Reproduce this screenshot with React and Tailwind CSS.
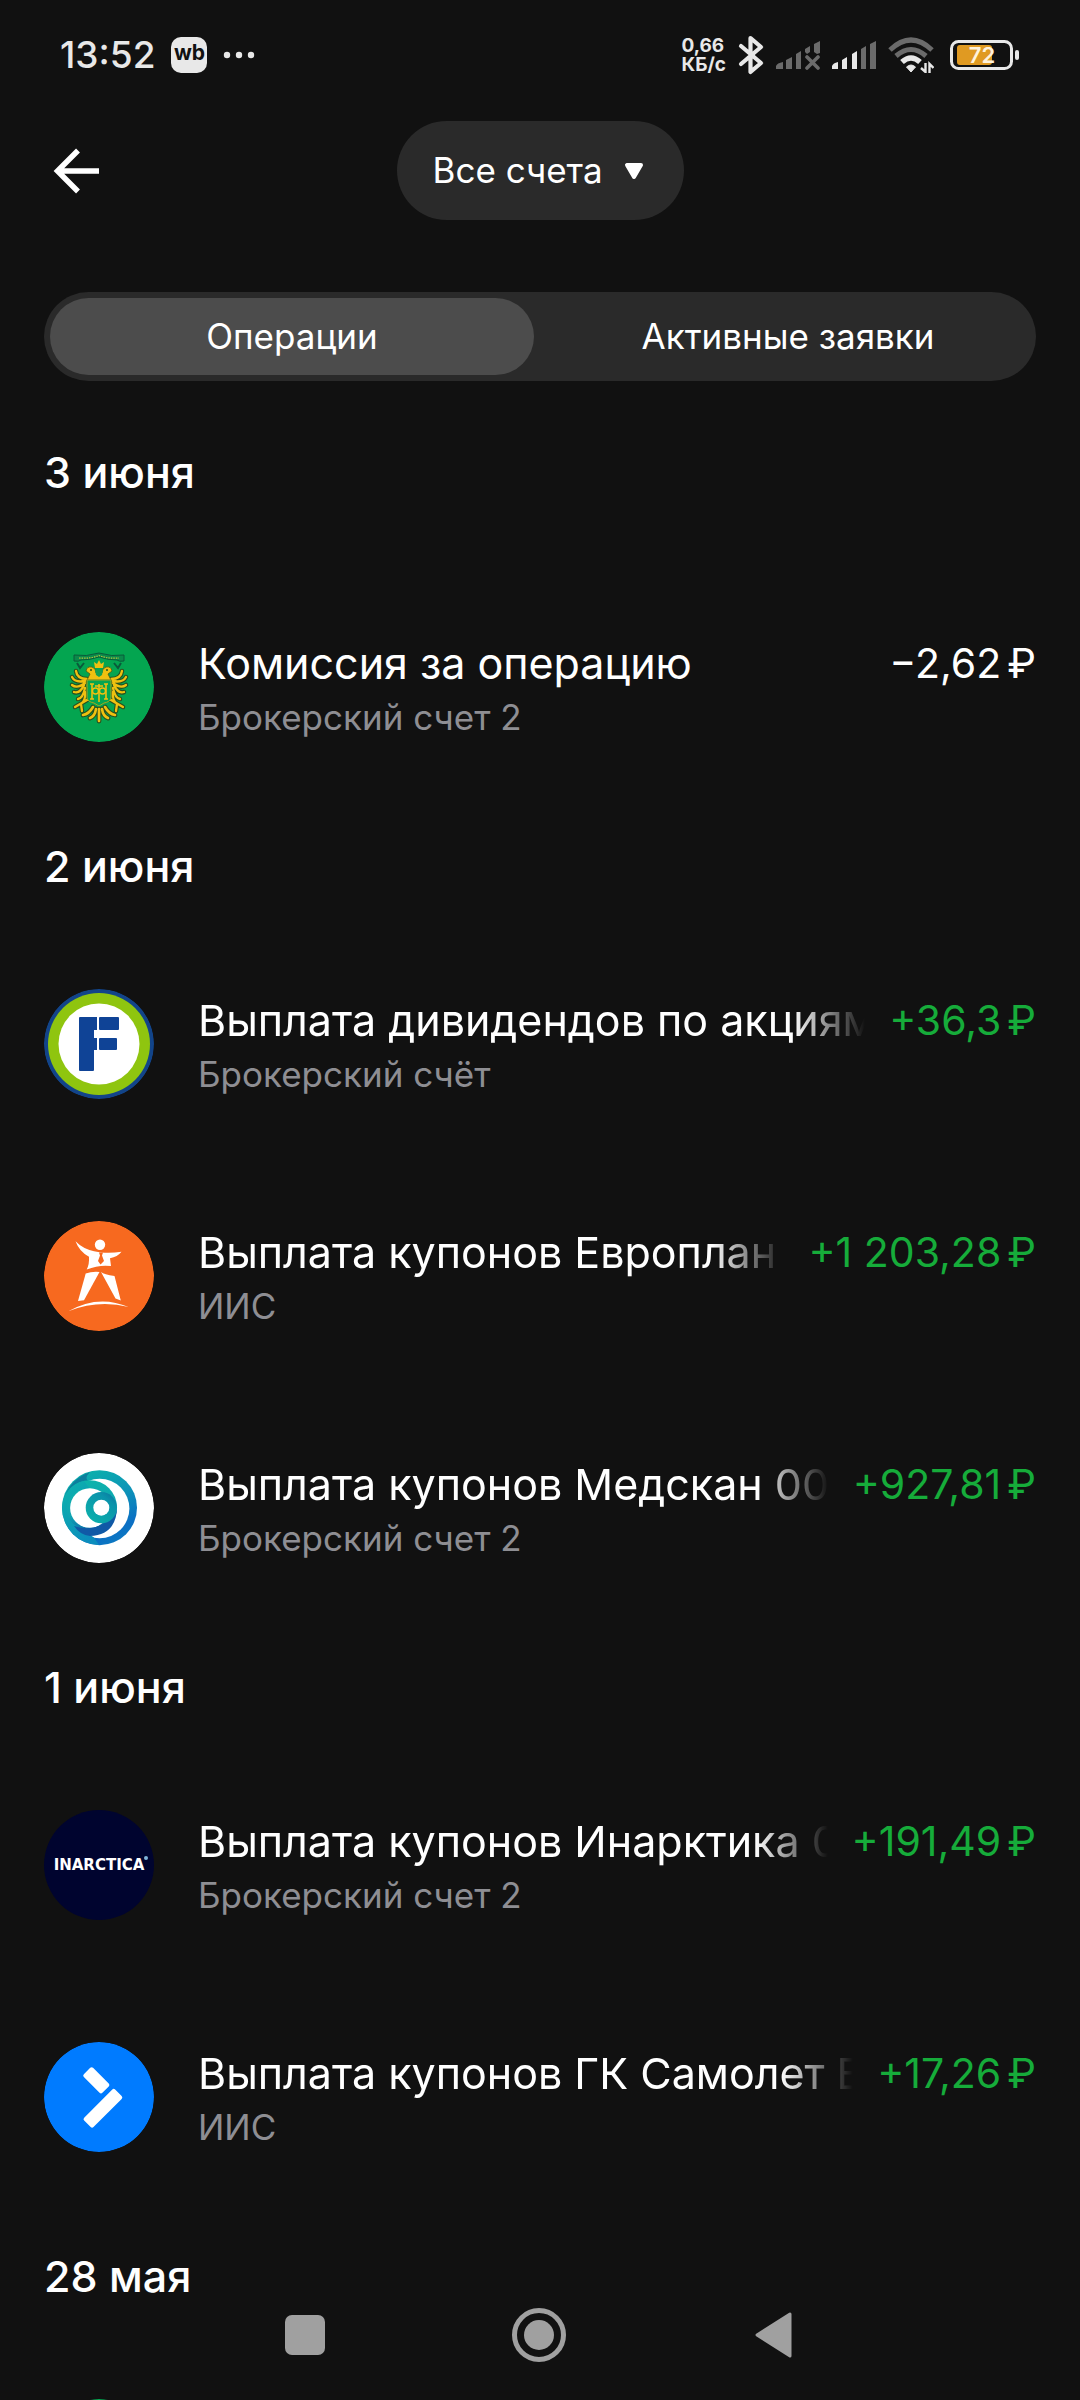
import { useState } from 'react';
import clsx from 'clsx';

const CrestLogo = () => (
    <svg viewBox="0 0 110 110" className="w-full h-full" aria-hidden="true">
        <circle cx="55" cy="55" r="55" fill="#04a550" />
        {/* Ribbon */}
        <path d="M30 23q12 2 25-2q13 4 25 2v6q-5 1-7-1q-9 0-18-3q-9 3-18 3q-2 2-7 1z" fill="#0b8a4a" stroke="#0a5a3a" strokeWidth="1" />
        <path d="M35 26q11 1 20-2.500q9 3.500 20 2.500" fill="none" stroke="#b9c23a" strokeWidth="1.200" strokeDasharray="1.500 1" />
        <path d="M33 31l3 5l4-5M77 31l-3 5l-4-5" fill="none" stroke="#0a5a3a" strokeWidth="2" />
        {/* Wings */}
        <g fill="none" stroke="#27501f" strokeWidth="4.500" strokeLinecap="round">
            <path d="M43 47Q33 47 32 39M41 49Q31 51 28 45M41 51Q33 57 28 53M40 53Q36 62 30 60M41 56Q39 66 34 67M41 60Q42 68 37 72M43 68L31 75M37 72L38 79" />
            <path d="M67 47Q77 47 78 39M69 49Q79 51 82 45M69 51Q77 57 82 53M70 53Q74 62 80 60M69 56Q71 66 76 67M69 60Q68 68 73 72M67 68L79 75M73 72L72 79" />
        </g>
        <g fill="none" stroke="#efc010" strokeWidth="2.300" strokeLinecap="round">
            <path d="M43 47Q33 47 32 39M41 49Q31 51 28 45M41 51Q33 57 28 53M40 53Q36 62 30 60M41 56Q39 66 34 67M41 60Q42 68 37 72M43 68L31 75M37 72L38 79" />
            <path d="M67 47Q77 47 78 39M69 49Q79 51 82 45M69 51Q77 57 82 53M70 53Q74 62 80 60M69 56Q71 66 76 67M69 60Q68 68 73 72M67 68L79 75M73 72L72 79" />
        </g>
        {/* Heads and crown */}
        <path d="M43 48l3-6l-4-3q1-5 6-4q4 1 4 6l3 3l3-3q0-5 4-6q5-1 6 4l-4 3l3 6z" fill="#efc010" stroke="#4a5a18" strokeWidth=".8" />
        <circle cx="47" cy="38" r="1" fill="#27501f" />
        <circle cx="63" cy="38" r="1" fill="#27501f" />
        <path d="M51 36l-1-6l3 2l2-4l2 4l3-2l-1 6z" fill="#efc010" />
        <path d="M51 38h8l-1 5l-3 2l-3-2z" fill="#12a050" />
        {/* Tail */}
        <g fill="none" strokeLinecap="round">
            <path d="M55 77V89M52 77Q51 84 46 86M58 77Q59 84 64 86M49 75Q45 82 39 83M61 75Q65 82 71 83" stroke="#27501f" strokeWidth="4.800" />
            <path d="M55 77V89M52 77Q51 84 46 86M58 77Q59 84 64 86M49 75Q45 82 39 83M61 75Q65 82 71 83" stroke="#efc010" strokeWidth="2.600" />
        </g>
        {/* Shield with the monogram */}
        <path d="M43 48H67V66Q66 70 60 71L55 74L50 71Q44 70 43 66Z" fill="#04a550" stroke="#a6a51c" strokeWidth="1" />
        <path d="M48 52V67M62 52V67M55 52V70M51 54H59M46 52h4M60 52h4M46 67h4M60 67h4" fill="none" stroke="#efc010" strokeWidth="1.600" />
        <circle cx="51.500" cy="59" r="3" fill="none" stroke="#efc010" strokeWidth="1.400" />
        <circle cx="58.500" cy="59" r="3" fill="none" stroke="#efc010" strokeWidth="1.400" />
    </svg>
);

const BlockLogo = () => (
    <svg viewBox="0 0 110 110" className="w-full h-full" aria-hidden="true">
        <circle cx="55" cy="55" r="55" fill="#124489" />
        <circle cx="55" cy="55" r="51" fill="#8fc50f" />
        <circle cx="55" cy="55" r="40.500" fill="#fff" />
        <g fill="#0f4396">
            <path d="M36 28H53V41H50V49H53V61H50V81Q50 82 49 82H36Q35 82 35 81V29Q35 28 36 28Z" />
            <rect x="55" y="28" width="20" height="13" rx="1" />
            <rect x="55" y="49" width="18" height="12" rx="1" />
        </g>
    </svg>
);

const ManLogo = () => (
    <svg viewBox="0 0 110 110" className="w-full h-full" aria-hidden="true">
        <circle cx="55" cy="55" r="55" fill="#f7691f" />
        <g fill="#fff">
            <circle cx="56" cy="23.700" r="5.200" />
            <path d="M31.500 20.300Q39 28 50 30.200L57 31.500Q67 32.500 77.500 30.800Q73.500 36 66 37.300L67 45Q55 43.500 42.700 48.500Q45.500 43 45 35.700Q35.500 31 31.500 20.300Z" />
            <path d="M41.700 52.500Q48 50.300 55.500 51L40 79.200L34 80Z" />
            <path d="M57 51Q60 53.500 70.500 55L76.800 79.500L71.500 77.500Z" />
            <path d="M24.300 90.300Q54 73 84.700 86Q54 78.500 24.300 90.300Z" />
        </g>
        <path d="M55 31.500h4l-1 3l2 5.500l-3.500 3.500l-2.500-3.500l2-5.500z" fill="#f7691f" />
    </svg>
);

const RingsLogo = () => (
    <svg viewBox="0 0 110 110" className="w-full h-full" aria-hidden="true">
        <defs>
            <linearGradient id="ring-outer" x1="0.3" y1="0" x2="0.800" y2="1">
                <stop offset="0" stopColor="#0bb2ab" />
                <stop offset="0.450" stopColor="#0d93b8" />
                <stop offset="0.800" stopColor="#0b6fc4" />
                <stop offset="1" stopColor="#0c7cc0" />
            </linearGradient>
            <linearGradient id="ring-middle" x1="0.400" y1="0" x2="0.600" y2="1">
                <stop offset="0" stopColor="#0cb4ab" />
                <stop offset="0.600" stopColor="#0fa3b2" />
                <stop offset="1" stopColor="#0d5aa6" />
            </linearGradient>
            <linearGradient id="ring-inner" x1="1" y1="0" x2="0.200" y2="1">
                <stop offset="0" stopColor="#0d6c9c" />
                <stop offset="0.300" stopColor="#0a93ab" />
                <stop offset="1" stopColor="#0cb0ab" />
            </linearGradient>
            <linearGradient id="ring-left" x1="0" y1="0" x2="0.600" y2="1">
                <stop offset="0" stopColor="#0cb4ab" />
                <stop offset="1" stopColor="#0c8dbd" />
            </linearGradient>
        </defs>
        <circle cx="55" cy="55" r="55" fill="#fff" />
        <circle cx="55.500" cy="54.700" r="37.500" fill="url(#ring-outer)" />
        <path d="M20 46Q26 26 46 19Q40 25 44 28Q28 30 20 46Z" fill="#0c7f9d" />
        <circle cx="55.700" cy="55.500" r="29.700" fill="#fff" />
        <circle cx="45.800" cy="54.500" r="27.200" fill="url(#ring-middle)" />
        <path d="M18 54.700A27.500 27.500 0 0 1 40 28L46 36A20 20 0 0 0 31 72L50 84.500L55 92A37.500 37.500 0 0 1 18 54.700Z" fill="url(#ring-left)" />
        <circle cx="45.800" cy="55" r="19.700" fill="#fff" />
        <path d="M30 73Q48 79 62 69Q72 64 73 55Q72 82 46 83Q36 82 30 73Z" fill="#1059a6" />
        <circle cx="57.300" cy="54.700" r="15.600" fill="url(#ring-inner)" />
        <circle cx="57.300" cy="54.700" r="8" fill="#fff" />
    </svg>
);

const InarcticaLogo = () => (
    <div className="relative flex items-center justify-center w-full h-full bg-[#00042f]">
        <span className="font-['DejaVu_Sans'] font-bold text-[15px] leading-none text-white">INARCTICA</span>
        <span className="absolute top-[46px] right-[6px] w-1 h-1 rounded-full bg-[#7fb4d8]" />
    </div>
);

const ArrowLogo = () => (
    <svg viewBox="0 0 110 110" className="w-full h-full" aria-hidden="true">
        <circle cx="55" cy="55" r="55" fill="#007bff" />
        <rect x="39.200" y="31.800" width="26.200" height="13" rx="2" fill="#fff" transform="rotate(45 52.300 38.300)" />
        <rect x="37" y="59.700" width="43.800" height="13.200" rx="2" fill="#fff" transform="rotate(-45 58.900 66.300)" />
    </svg>
);

const SECTIONS = [
    {
        date: '3 июня',
        items: [{ logo: CrestLogo, title: 'Комиссия за операцию', account: 'Брокерский счет 2', amount: '−2,62' }],
    },
    {
        date: '2 июня',
        items: [
            { logo: BlockLogo, title: 'Выплата дивидендов по акциям', account: 'Брокерский счёт', amount: '+36,3', fade: true },
            { logo: ManLogo, title: 'Выплата купонов Европлан', account: 'ИИС', amount: '+1 203,28', fade: true },
            { logo: RingsLogo, title: 'Выплата купонов Медскан 00', account: 'Брокерский счет 2', amount: '+927,81', fade: true },
        ],
    },
    {
        date: '1 июня',
        items: [
            { logo: InarcticaLogo, title: 'Выплата купонов Инарктика 0', account: 'Брокерский счет 2', amount: '+191,49', fade: true },
            { logo: ArrowLogo, title: 'Выплата купонов ГК Самолет Б', account: 'ИИС', amount: '+17,26', fade: true },
        ],
    },
    {
        date: '28 мая',
        items: [{ logo: CrestLogo, title: '', account: '', amount: '' }],
    },
];

const StatusBar = () => (
    <div className="flex items-center justify-between h-[109px] px-[60px] shrink-0 text-[#e8e8e8]">
        <div className="flex items-center gap-4">
            <span className="text-[37px] leading-none font-medium">13:52</span>
            <span className="flex items-center justify-center w-9 h-9 rounded-[10px] bg-[#e8e8e8] text-[#111] text-[21px] leading-none font-bold pb-1">wb</span>
            <svg width="32" height="8" viewBox="0 0 32 8" fill="currentColor" aria-hidden="true">
                <circle cx="4" cy="4" r="3.200" />
                <circle cx="16" cy="4" r="3.200" />
                <circle cx="28" cy="4" r="3.200" />
            </svg>
        </div>
        <div className="flex items-center gap-3">
            <div className="flex flex-col text-[19px] leading-[19px] font-bold">
                <span>0,66</span>
                <span>КБ/с</span>
            </div>
            <svg width="26" height="40" viewBox="0 0 26 40" fill="none" stroke="currentColor" strokeWidth="4.200" strokeLinecap="round" strokeLinejoin="round" aria-hidden="true">
                <path d="M3 11L23 28L12.500 37V3L23 12L3 29" />
            </svg>
            <svg width="44" height="30" viewBox="0 0 44 30" fill="#6b6b6b" aria-hidden="true">
                <path d="M0 29V26Q1 23 7 22V29ZM10 29V20L16 17V29ZM20 29V14L25 11V29ZM29 12V9L34 6V12L31 14ZM38 12V4L44 1V13L41 14Z" />
                <path d="M31 17L42 28M42 17L31 28" stroke="#6b6b6b" strokeWidth="3.600" strokeLinecap="round" />
            </svg>
            <svg width="44" height="30" viewBox="0 0 44 30" fill="currentColor" aria-hidden="true">
                <path d="M0 29V26Q1 23 6 22V29ZM10 29V20L15 17V29ZM20 29V14L25 11V29Z" />
                <path d="M29 29V9L34 6V29ZM38 29V4L44 1V29Z" fill="#6b6b6b" />
            </svg>
            <svg width="46" height="36" viewBox="0 0 46 36" fill="none" aria-hidden="true">
                <path d="M2 13Q23-7 44 13" stroke="#6b6b6b" strokeWidth="5" />
                <path d="M8 19Q23 6 38 19" stroke="#6b6b6b" strokeWidth="5" />
                <path d="M14 25Q23 17 32 25" stroke="currentColor" strokeWidth="5.500" />
                <path d="M18.500 30Q23 26 27.500 30L23 35Z" fill="currentColor" stroke="currentColor" strokeWidth="1" />
                <path d="M37.500 26V35L33 31M41.500 36V27L45.500 31" stroke="currentColor" strokeWidth="2.400" />
            </svg>
            <svg width="70" height="32" viewBox="0 0 70 32" className="ml-1" role="img" aria-label="72">
                <rect x="1.500" y="2.500" width="60" height="27" rx="7" fill="none" stroke="#e8e8e8" strokeWidth="3" />
                <rect x="7" y="6" width="35" height="20" rx="3" fill="#e09a22" />
                <rect x="65" y="11" width="4" height="10" rx="2" fill="#e8e8e8" />
                <text x="32" y="24" textAnchor="middle" fill="#fff3dc" fontSize="22" fontWeight="600">72</text>
            </svg>
        </div>
    </div>
);

const OperationRow = ({ logo: Logo, title, account, amount, fade }) => (
    <li className="flex items-center gap-11 h-[232px]">
        <div className="w-[110px] h-[110px] rounded-full overflow-hidden shrink-0">
            <Logo />
        </div>
        <div className="flex-1 min-w-0">
            <div className="flex gap-6 leading-[60px]">
                <p
                    className={clsx(
                        'flex-1 min-w-0 overflow-hidden whitespace-nowrap text-[43px]',
                        fade && '[mask-image:linear-gradient(to_left,transparent,black_72px)]'
                    )}
                >
                    {title}
                </p>
                {amount && (
                    <p className={clsx('flex gap-[6px] whitespace-nowrap text-[41px]', amount.startsWith('+') && 'text-[#16ac3a]')}>
                        <span>{amount}</span>
                        <span>₽</span>
                    </p>
                )}
            </div>
            <p className="text-[35px] leading-[48px] text-[#8e8e93]">{account}</p>
        </div>
    </li>
);

const App = () => {
    const [tab, setTab] = useState('operations');

    const tabClass = (name) =>
        clsx('flex-1 h-[77px] rounded-full text-[35px] leading-none', tab === name && 'bg-[#4c4c4c]');

    return (
        <div className="relative flex flex-col h-screen overflow-hidden bg-[#111111] text-white font-['Inter',sans-serif]">
            <StatusBar />

            <header className="grid grid-cols-[1fr_auto_1fr] items-center px-[44px] pt-3 shrink-0">
                <button type="button" aria-label="Назад" className="justify-self-start p-2">
                    <svg width="48" height="48" viewBox="0 0 48 48" fill="none" stroke="currentColor" strokeWidth="5.500" aria-hidden="true">
                        <path d="M47 24H7M26 3.500L5.500 24L26 44.500" />
                    </svg>
                </button>
                <div className="relative">
                    <select
                        aria-label="Счета"
                        className="appearance-none h-[99px] pl-9 pr-20 rounded-full bg-[#2a2a2a] text-[35px] text-white"
                    >
                        <option>Все счета</option>
                    </select>
                    <svg width="20" height="18" viewBox="0 0 20 18" className="absolute right-10 top-[42px] pointer-events-none" aria-hidden="true">
                        <path d="M3 2H17L10 14Z" fill="#fff" stroke="#fff" strokeWidth="4" strokeLinejoin="round" />
                    </svg>
                </div>
            </header>

            <div className="flex gap-3 mx-[44px] mt-[72px] p-[6px] rounded-full bg-[#2a2a2a] shrink-0">
                <button type="button" className={tabClass('operations')} onClick={() => setTab('operations')}>
                    Операции
                </button>
                <button type="button" className={tabClass('orders')} onClick={() => setTab('orders')}>
                    Активные заявки
                </button>
            </div>

            <main className="flex-1 min-h-0 overflow-hidden px-[44px] pt-7">
                {SECTIONS.map(({ date, items }) => (
                    <section key={date} className="first:[&>ul]:pt-[37px]">
                        <h2 className="pt-[35px] pb-[33px] text-[43px] leading-[57px] font-medium">{date}</h2>
                        <ul>
                            {items.map((item, i) => (
                                <OperationRow key={i} {...item} />
                            ))}
                        </ul>
                    </section>
                ))}
            </main>

            {/* System navigation floats over the list */}
            <nav className="absolute inset-x-0 bottom-0 flex justify-center h-[130px] pr-0.5">
                <button type="button" aria-label="Недавние" className="flex items-center justify-center w-[234px]">
                    <span className="w-10 h-10 rounded-[7px] bg-[#a0a0a0]" />
                </button>
                <button type="button" aria-label="Домой" className="flex items-center justify-center w-[234px]">
                    <svg width="56" height="56" viewBox="0 0 56 56" aria-hidden="true">
                        <circle cx="28" cy="28" r="24.500" fill="none" stroke="#a0a0a0" strokeWidth="5" />
                        <circle cx="28" cy="28" r="15" fill="#a0a0a0" />
                    </svg>
                </button>
                <button type="button" aria-label="Назад в системе" className="flex items-center justify-center w-[234px]">
                    <svg width="38" height="46" viewBox="0 0 38 46" aria-hidden="true">
                        <path d="M36 2V44L3 23Z" fill="#a0a0a0" stroke="#a0a0a0" strokeWidth="3" strokeLinejoin="round" />
                    </svg>
                </button>
            </nav>
        </div>
    );
};

export default App;
